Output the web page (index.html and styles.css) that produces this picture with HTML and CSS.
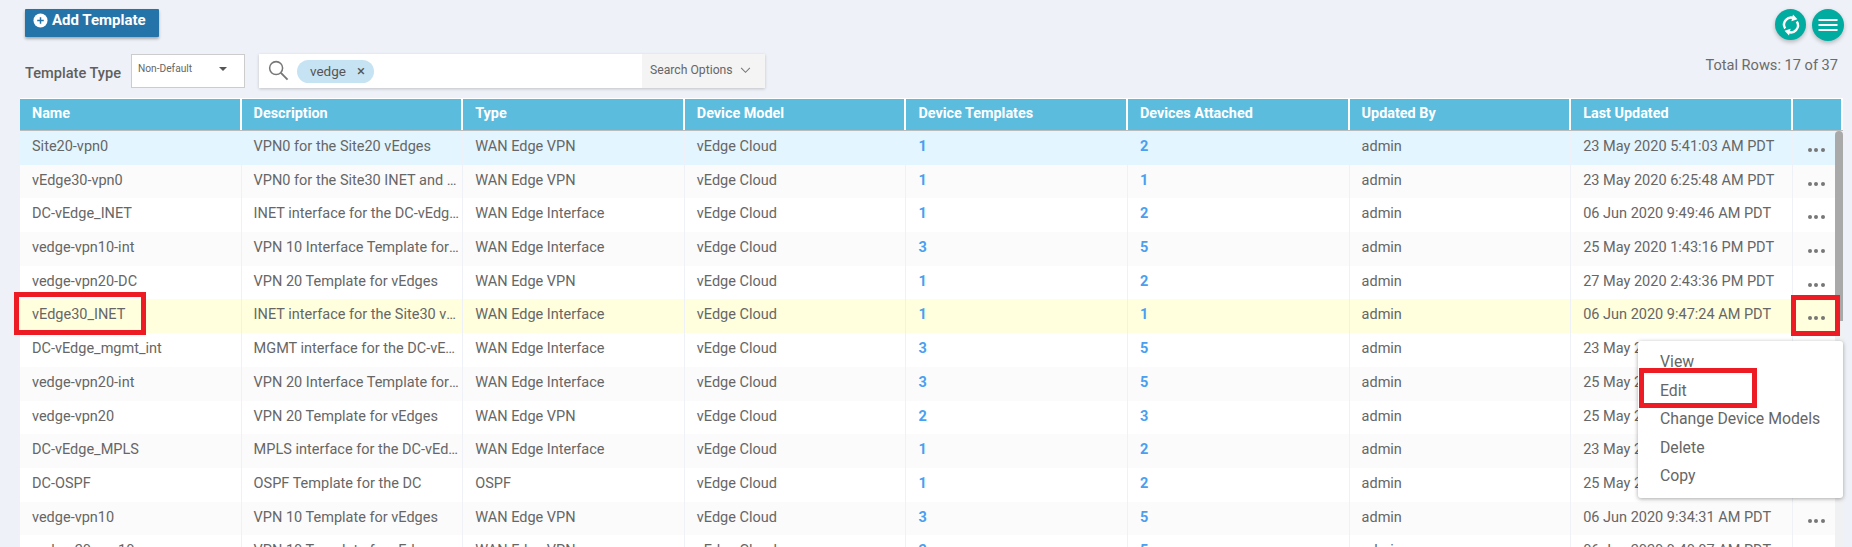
FILE: index.html
```html
<!DOCTYPE html>
<html lang="en">
<head>
<meta charset="utf-8">
<title>Feature Templates</title>
<link rel="stylesheet" href="styles.css">
</head>
<body>
<div class="page">
  <div class="top-bar">
    <button class="add-btn"><svg class="add-icon" viewBox="0 0 16 16"><circle cx="8" cy="8" r="7.5" fill="#fff"/><path d="M8 4.5v7M4.5 8h7" stroke="#2574a9" stroke-width="1.6"/></svg>Add Template</button>
    <div class="round-btns">
      <button class="round-btn"><svg viewBox="0 0 24 24" width="24" height="24" fill="none" stroke="#fff" stroke-width="2.4"><path d="M6.2 15.5A7 7 0 0 1 15.5 5.6"/><path d="M17.8 8.5A7 7 0 0 1 8.5 18.4"/><path d="M14 1.6l4.4 4.6-6 2z" fill="#fff" stroke="none"/><path d="M10 22.4l-4.4-4.6 6-2z" fill="#fff" stroke="none"/></svg></button>
      <button class="round-btn wide"><svg viewBox="0 0 24 24" width="24" height="24" stroke="#fff" stroke-width="2"><path d="M2.5 7h19M2.5 12h19M2.5 17h19"/></svg></button>
    </div>
  </div>
  <div class="filter-bar">
    <span class="filter-label">Template Type</span>
    <div class="select"><span>Non-Default</span><i class="caret"></i></div>
    <div class="search">
      <svg class="search-icon" viewBox="0 0 22 22" fill="none" stroke="#777" stroke-width="1.6"><circle cx="8.5" cy="8.5" r="6.8"/><path d="M13.5 13.5l7 7" stroke-width="2"/></svg>
      <span class="chip">vedge<span class="chip-x">×</span></span>
      <span class="search-opts">Search Options<svg viewBox="0 0 12 8" width="11" height="7" fill="none" stroke="#777" stroke-width="1.2"><path d="M1 1l5 5 5-5"/></svg></span>
    </div>
    <span class="total">Total Rows: 17 of 37</span>
  </div>

  <div class="grid head">
    <div>Name</div><div>Description</div><div>Type</div><div>Device Model</div><div>Device Templates</div><div>Devices Attached</div><div>Updated By</div><div>Last Updated</div><div></div>
  </div>
  <div class="body-wrap">
    <div class="grid row sel"><div>Site20-vpn0</div><div>VPN0 for the Site20 vEdges</div><div>WAN Edge VPN</div><div>vEdge Cloud</div><div class="n">1</div><div class="n">2</div><div>admin</div><div>23 May 2020 5:41:03 AM PDT</div><div class="dots"><i></i><i></i><i></i></div></div>
    <div class="grid row alt"><div>vEdge30-vpn0</div><div class="clip">VPN0 for the Site30 INET and MPLS</div><div>WAN Edge VPN</div><div>vEdge Cloud</div><div class="n">1</div><div class="n">1</div><div>admin</div><div>23 May 2020 6:25:48 AM PDT</div><div class="dots"><i></i><i></i><i></i></div></div>
    <div class="grid row"><div>DC-vEdge_INET</div><div class="clip">INET interface for the DC-vEdges</div><div>WAN Edge Interface</div><div>vEdge Cloud</div><div class="n">1</div><div class="n">2</div><div>admin</div><div>06 Jun 2020 9:49:46 AM PDT</div><div class="dots"><i></i><i></i><i></i></div></div>
    <div class="grid row alt"><div>vedge-vpn10-int</div><div class="clip">VPN 10 Interface Template for vEdges</div><div>WAN Edge Interface</div><div>vEdge Cloud</div><div class="n">3</div><div class="n">5</div><div>admin</div><div>25 May 2020 1:43:16 PM PDT</div><div class="dots"><i></i><i></i><i></i></div></div>
    <div class="grid row"><div>vedge-vpn20-DC</div><div>VPN 20 Template for vEdges</div><div>WAN Edge VPN</div><div>vEdge Cloud</div><div class="n">1</div><div class="n">2</div><div>admin</div><div>27 May 2020 2:43:36 PM PDT</div><div class="dots"><i></i><i></i><i></i></div></div>
    <div class="grid row hi"><div>vEdge30_INET</div><div class="clip">INET interface for the Site30 vEdges</div><div>WAN Edge Interface</div><div>vEdge Cloud</div><div class="n">1</div><div class="n">1</div><div>admin</div><div>06 Jun 2020 9:47:24 AM PDT</div><div class="dots"><i></i><i></i><i></i></div></div>
    <div class="grid row"><div>DC-vEdge_mgmt_int</div><div class="clip">MGMT interface for the DC-vEdges</div><div>WAN Edge Interface</div><div>vEdge Cloud</div><div class="n">3</div><div class="n">5</div><div>admin</div><div>23 May 2020 9:12:09 AM PDT</div><div class="dots"><i></i><i></i><i></i></div></div>
    <div class="grid row alt"><div>vedge-vpn20-int</div><div class="clip">VPN 20 Interface Template for vEdges</div><div>WAN Edge Interface</div><div>vEdge Cloud</div><div class="n">3</div><div class="n">5</div><div>admin</div><div>25 May 2020 1:50:21 PM PDT</div><div class="dots"><i></i><i></i><i></i></div></div>
    <div class="grid row"><div>vedge-vpn20</div><div>VPN 20 Template for vEdges</div><div>WAN Edge VPN</div><div>vEdge Cloud</div><div class="n">2</div><div class="n">3</div><div>admin</div><div>25 May 2020 1:38:44 PM PDT</div><div class="dots"><i></i><i></i><i></i></div></div>
    <div class="grid row alt"><div>DC-vEdge_MPLS</div><div class="clip">MPLS interface for the DC-vEdges</div><div>WAN Edge Interface</div><div>vEdge Cloud</div><div class="n">1</div><div class="n">2</div><div>admin</div><div>23 May 2020 9:05:17 AM PDT</div><div class="dots"><i></i><i></i><i></i></div></div>
    <div class="grid row"><div>DC-OSPF</div><div>OSPF Template for the DC</div><div>OSPF</div><div>vEdge Cloud</div><div class="n">1</div><div class="n">2</div><div>admin</div><div>25 May 2020 1:21:33 PM PDT</div><div class="dots"><i></i><i></i><i></i></div></div>
    <div class="grid row alt"><div>vedge-vpn10</div><div>VPN 10 Template for vEdges</div><div>WAN Edge VPN</div><div>vEdge Cloud</div><div class="n">3</div><div class="n">5</div><div>admin</div><div>06 Jun 2020 9:34:31 AM PDT</div><div class="dots"><i></i><i></i><i></i></div></div>
    <div class="grid row"><div>vedge-20-vpn10</div><div>VPN 10 Template for vEdges</div><div>WAN Edge VPN</div><div>vEdge Cloud</div><div class="n">3</div><div class="n">5</div><div>admin</div><div>06 Jun 2020 9:40:07 AM PDT</div><div class="dots"><i></i><i></i><i></i></div></div>
    <div class="track"><div class="thumb"></div></div>
  </div>
</div>
<div class="menu">
  <div>View</div><div>Edit</div><div>Change Device Models</div><div>Delete</div><div>Copy</div>
</div>
<div class="mark mark-name"></div>
<div class="mark mark-dots"></div>
<div class="mark mark-edit"></div>
</body>
</html>
```
FILE: styles.css
```css
* { box-sizing: border-box; }
html, body { margin: 0; height: 547px; overflow: hidden; }
body { background: #eef1f7; font-family: Roboto, "Liberation Sans", sans-serif; color: #666; position: relative; }
.page { padding: 9px 9px 0 19px; }
.top-bar { display: flex; justify-content: space-between; height: 31px; padding: 0 0 0 6px; }
.add-btn { display: flex; align-items: center; gap: 4px; width: 134px; height: 28px; padding: 0 0 6px 8px; border: 0; border-radius: 1px; background: #2574a9; color: #fff; font: 700 15px Roboto, sans-serif; box-shadow: 0 2px 3px rgba(0,0,0,.3); }
.add-icon { width: 15px; height: 15px; }
.round-btns { display: flex; gap: 6px; margin-right: -1px; }
.round-btn { width: 31px; height: 31px; padding: 0; border: 0; border-radius: 50%; background: #00aba0; display: flex; align-items: center; justify-content: center; box-shadow: 0 2px 4px rgba(0,0,0,.25); }
.round-btn.wide { width: 32px; height: 32px; }
.filter-bar { display: flex; align-items: stretch; height: 34px; margin-top: 14px; padding-left: 6px; position: relative; }
.filter-label { width: 106px; font-size: 14.6px; font-weight: 500; color: #5f5f5f; line-height: 39px; }
.select { width: 114px; display: flex; align-items: center; justify-content: space-between; padding: 0 17px 5px 6px; background: #fff; border: 1px solid #ccc; font-size: 10.2px; }
.caret { width: 0; height: 0; border: 4px solid transparent; border-top: 4px solid #555; border-bottom: 0; margin-top: 1px; }
.search { width: 506px; margin-left: 14px; display: flex; align-items: center; background: #fff; box-shadow: 0 1px 3px rgba(0,0,0,.2); position: relative; }
.search-icon { width: 21px; height: 21px; margin: -2px 0 0 9px; }
.chip { display: flex; align-items: center; height: 23px; margin-left: 8px; padding: 0 9px 0 13px; border-radius: 12px; background: #c6e3f4; font-size: 13.5px; color: #555; }
.chip-x { margin-left: 11px; font-size: 15px; }
.search-opts { margin-left: auto; width: 123px; height: 100%; display: flex; align-items: center; gap: 7px; padding: 0 0 2px 8px; background: #f4f4f4; font-size: 12.2px; }
.total { margin-left: auto; margin-right: 5px; font-size: 14.6px; line-height: 20px; color: #6b6b6b; transform: translateY(1px); }
.grid { display: grid; grid-template-columns: repeat(8, 221.6px) 50px; }
.head { margin-top: 10px; height: 33px; margin-left: 1px; background: #fff; border-bottom: 1px solid #bbb; }
.head > div { background: #5bbcde; color: #fff; font-size: 14.4px; font-weight: 700; padding: 0 12px; line-height: 30px; border: solid #fff; border-width: 1px 2px 0 0; }
.body-wrap { position: relative; margin-left: 1px; }
.row { height: 33.7px; background: #fff; }
.row > div { padding: 0 12px; font-size: 14.5px; line-height: 31px; white-space: nowrap; overflow: hidden; border-right: 1px solid #eef1f7; }
.row.alt { background: #fbfbfb; }
.row.sel { background: #e3f5fe; }
.row.hi { background: #ffffdd; }
.row > .clip { text-overflow: ellipsis; padding-right: 1px; }
.row > .n { color: #4a9ff0; font-weight: 700; }
.row > .dots { display: flex; gap: 2.5px; padding: 17px 0 0 15px; border-right: 0; }
.dots i { width: 4px; height: 4px; border-radius: 50%; background: #777; }
.track { position: absolute; top: 0; right: 0; bottom: 0; width: 8px; background: #f0f1f3; }
.thumb { height: 190px; border-radius: 4px 4px 0 0; background: #a9a9a9; }
.menu { position: absolute; left: 1638px; top: 341px; width: 205px; height: 157px; padding: 7px 0 0 22px; background: #fff; border-radius: 3px; box-shadow: 0 1px 4px rgba(0,0,0,.35); font-size: 15.8px; color: #666; line-height: 28.5px; }
.mark { position: absolute; border: 5px solid #ed1c24; }
.mark-name { left: 14px; top: 292px; width: 132px; height: 43px; }
.mark-dots { left: 1791px; top: 295px; width: 49px; height: 41px; }
.mark-edit { left: 1639px; top: 368px; width: 118px; height: 40px; }
```
